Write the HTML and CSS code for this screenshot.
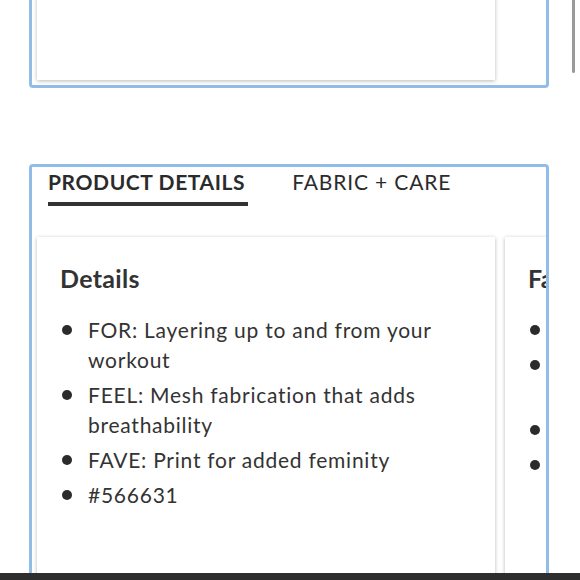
FILE: index.html
```html
<!DOCTYPE html>
<html>
<head>
<meta charset="utf-8">
<link rel="stylesheet" href="styles.css">
</head>
<body>
<div class="page">
  <section class="panel panel-top">
    <div class="card card-top"></div>
  </section>

  <section class="panel panel-details">
    <div class="tabs">
      <div class="tab tab-active">PRODUCT DETAILS</div>
      <div class="tab">FABRIC + CARE</div>
    </div>
    <div class="cards">
      <div class="card info-card">
        <h2 class="info-title">Details</h2>
        <ul class="info-list">
          <li>FOR: Layering up to and from your workout</li>
          <li>FEEL: Mesh fabrication that adds breathability</li>
          <li>FAVE: Print for added feminity</li>
          <li>#566631</li>
        </ul>
      </div>
      <div class="card info-card">
        <h2 class="info-title">Fabric</h2>
        <ul class="info-list">
          <li>Polyester</li>
          <li>Lightweight recycled polyester mesh with spandex for stretch</li>
          <li>Imported</li>
          <li>Machine wash</li>
        </ul>
      </div>
    </div>
  </section>

  <div class="scroll-indicator"></div>
  <div class="bottom-bar"></div>
</div>
</body>
</html>
```

FILE: styles.css
```css
* { box-sizing: border-box; }

html, body {
  margin: 0;
  padding: 0;
  background: #ffffff;
}

body {
  font-family: "Lato", "Noto Sans", sans-serif;
  color: #333333;
}

.page {
  position: relative;
  width: 580px;
  height: 580px;
  overflow: hidden;
}

.panel {
  width: 520px;
  margin-left: 29px;
  border: 3px solid #92bce8;
  border-radius: 4px;
  background: #ffffff;
}

.panel-top {
  margin-top: -20px;
  height: 108px;
  padding: 0 0 5px 5px;
  display: flex;
  align-items: flex-end;
}

.card {
  background: #ffffff;
  box-shadow: 0 1px 4px rgba(0, 0, 0, 0.28);
}

.card-top {
  width: 458px;
  height: 100%;
}

.panel-details {
  margin-top: 76px;
  height: 440px;
  border-bottom: none;
  border-radius: 4px 4px 0 0;
  overflow: hidden;
}

.tabs {
  display: flex;
  gap: 44px;
  padding: 3px 0 0 16px;
}

.tab {
  font-size: 21px;
  line-height: 24px;
  padding-bottom: 8px;
  color: #2b2b2b;
  letter-spacing: 0.85px;
}

.tab-active {
  font-weight: 700;
  letter-spacing: 0.6px;
  padding-right: 3px;
  border-bottom: 4px solid #333333;
}

.cards {
  display: flex;
  gap: 10px;
  padding: 31px 0 0 5px;
}

.info-card {
  flex: 0 0 458px;
  height: 400px;
  padding: 26px 20px 0 23px;
}

.info-title {
  margin: 0;
  font-size: 25px;
  line-height: 30px;
  font-weight: 700;
  letter-spacing: 0.3px;
  color: #333333;
}

.info-list {
  margin: 22px 0 0 0;
  padding: 0 0 0 28px;
  list-style: none;
}

.info-list li {
  position: relative;
  font-size: 21px;
  line-height: 30px;
  letter-spacing: 0.75px;
  margin-bottom: 5px;
  color: #333333;
}

.info-list li::before {
  content: "";
  position: absolute;
  left: -26px;
  top: 10px;
  width: 10px;
  height: 10px;
  border-radius: 50%;
  background: #2b2b2b;
}

.scroll-indicator {
  position: absolute;
  top: 0;
  left: 572px;
  width: 3px;
  height: 73px;
  border-radius: 0 0 2px 2px;
  background: #9a9a9a;
}

.bottom-bar {
  position: absolute;
  left: 0;
  bottom: 0;
  width: 580px;
  height: 7px;
  background: #2e2e2e;
}
```
